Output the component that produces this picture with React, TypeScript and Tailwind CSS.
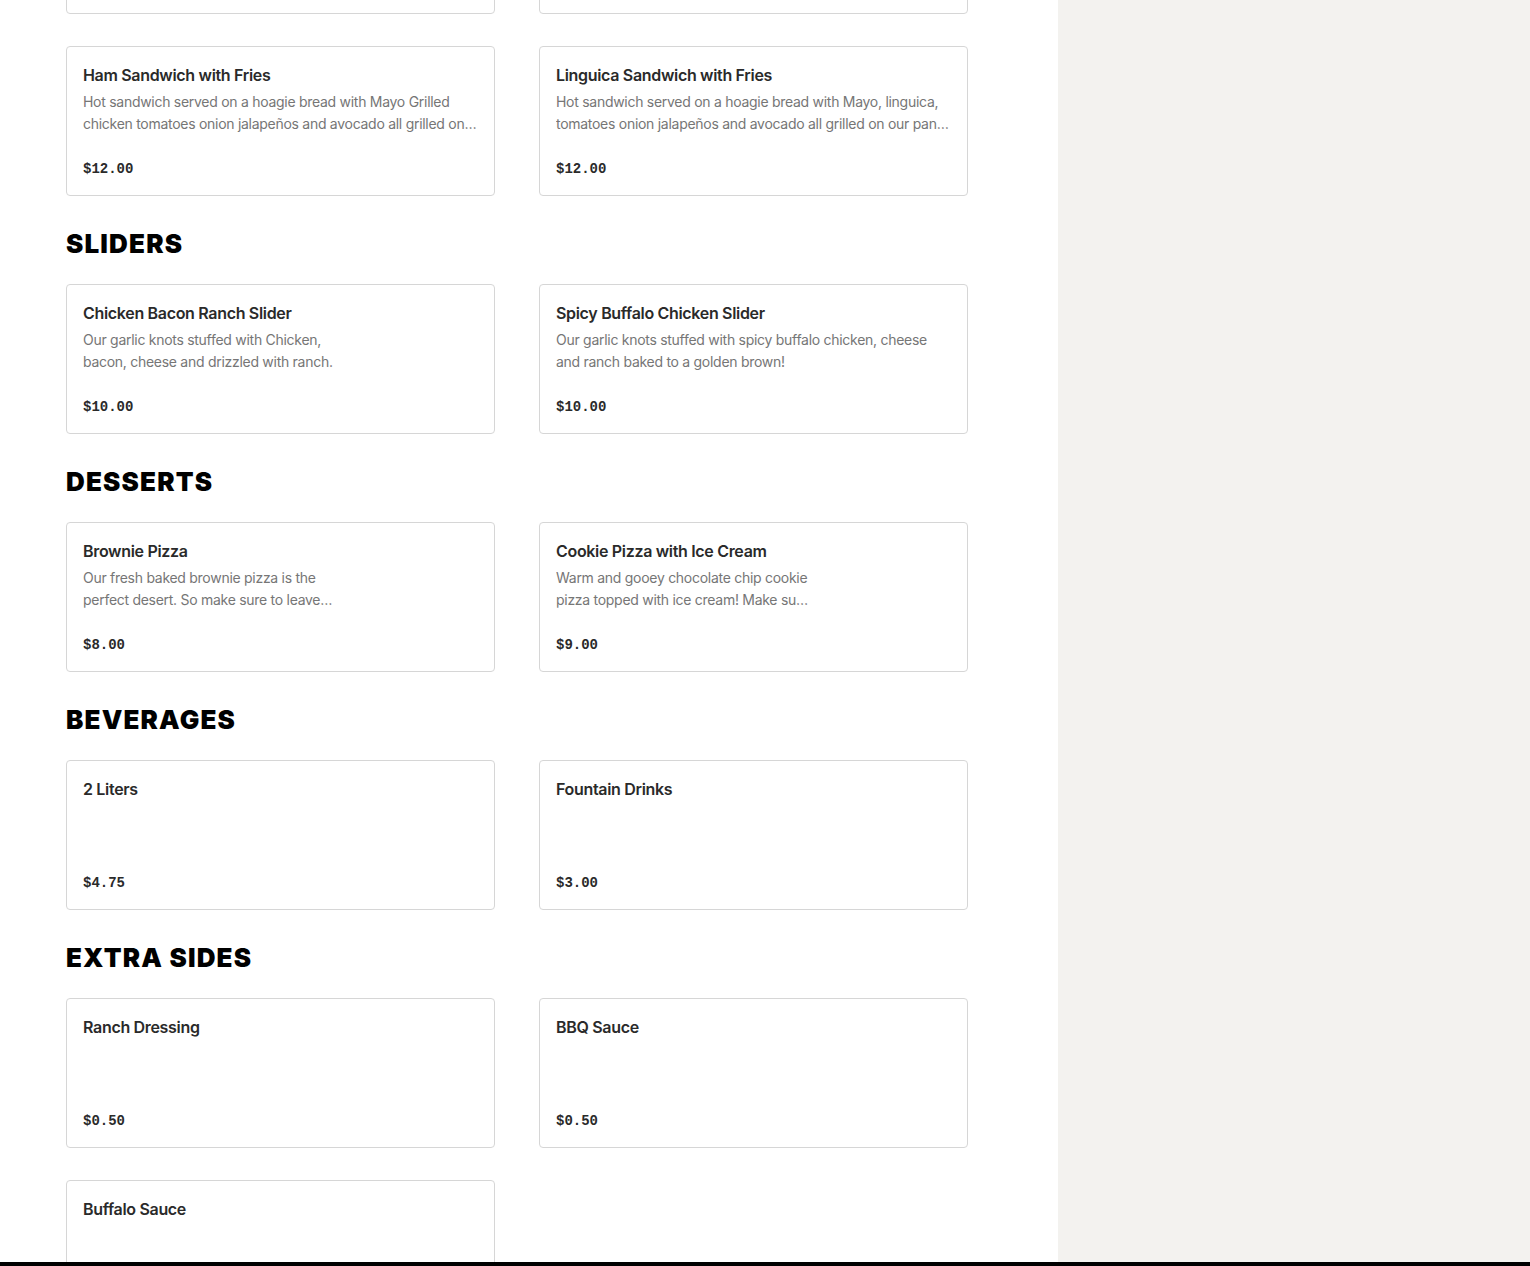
import React from "react";

type Item = { name: string; desc?: string; price: string; narrow?: boolean };
type Section = { title?: string; items: Item[] };

const sections: Section[] = [
  {
    items: [
      {
        name: "Chicken Sandwich with Fries",
        desc: "Hot sandwich served on a hoagie bread with Mayo Grilled chicken tomatoes onion jalapeños and avocado all grilled on our panini press.",
        price: "$12.00",
      },
      {
        name: "Steak Sandwich with Fries",
        desc: "Hot sandwich served on a hoagie bread with Mayo, steak, tomatoes onion jalapeños and avocado all grilled on our panini press.",
        price: "$12.00",
      },
      {
        name: "Ham Sandwich with Fries",
        desc: "Hot sandwich served on a hoagie bread with Mayo Grilled chicken tomatoes onion jalapeños and avocado all grilled on our panini press.",
        price: "$12.00",
      },
      {
        name: "Linguica Sandwich with Fries",
        desc: "Hot sandwich served on a hoagie bread with Mayo, linguica, tomatoes onion jalapeños and avocado all grilled on our panini press.",
        price: "$12.00",
      },
    ],
  },
  {
    title: "SLIDERS",
    items: [
      {
        name: "Chicken Bacon Ranch Slider",
        desc: "Our garlic knots stuffed with Chicken, bacon, cheese and drizzled with ranch.",
        price: "$10.00",
        narrow: true,
      },
      {
        name: "Spicy Buffalo Chicken Slider",
        desc: "Our garlic knots stuffed with spicy buffalo chicken, cheese and ranch baked to a golden brown!",
        price: "$10.00",
      },
    ],
  },
  {
    title: "DESSERTS",
    items: [
      {
        name: "Brownie Pizza",
        desc: "Our fresh baked brownie pizza is the perfect desert. So make sure to leave room for dessert!",
        price: "$8.00",
        narrow: true,
      },
      {
        name: "Cookie Pizza with Ice Cream",
        desc: "Warm and gooey chocolate chip cookie pizza topped with ice cream! Make sure to save room!",
        price: "$9.00",
        narrow: true,
      },
    ],
  },
  {
    title: "BEVERAGES",
    items: [
      { name: "2 Liters", price: "$4.75" },
      { name: "Fountain Drinks", price: "$3.00" },
    ],
  },
  {
    title: "EXTRA SIDES",
    items: [
      { name: "Ranch Dressing", price: "$0.50" },
      { name: "BBQ Sauce", price: "$0.50" },
      { name: "Buffalo Sauce", price: "$0.50" },
    ],
  },
];

function Card({ item }: { item: Item }) {
  return (
    <div className="h-[150px] flex flex-col border border-[#d6d6d6] rounded-[4px] bg-white px-4 pt-[16px] pb-[16px]">
      <div className="text-[16px] leading-[24px] font-semibold tracking-[-0.02em] text-[#2a2a2a]">
        {item.name}
      </div>
      {item.desc && (
        <div
          className={
            "mt-[4px] text-[14px] leading-[22px] tracking-[-0.02em] text-[#767676] line-clamp-2 " +
            (item.narrow ? "max-w-[256px]" : "")
          }
        >
          {item.desc}
        </div>
      )}
      <div
        className="mt-auto text-[14px] leading-[20px] font-bold text-[#2a2a2a]"
        style={{ fontFamily: '"Liberation Mono", "DejaVu Sans Mono", monospace' }}
      >
        {item.price}
      </div>
    </div>
  );
}

export default function App() {
  return (
    <div
      className="h-[1266px] overflow-hidden flex bg-white"
      style={{ fontFamily: 'Inter, "Noto Sans", Arial, sans-serif' }}
    >
      <div className="w-[1058px] shrink-0 bg-white pl-[66px] pr-[90px]">
        <div className="-mt-[136px] flex flex-col">
          {sections.map((s, i) => (
            <div key={i} className={i === 0 ? "" : "mt-[32px]"}>
              {s.title && (
                <h2 className="text-[26px] leading-[32px] font-black tracking-[0.045em] text-black mb-[24px]">
                  {s.title}
                </h2>
              )}
              <div className="grid grid-cols-2 gap-x-[44px] gap-y-[32px]">
                {s.items.map((it) => (
                  <Card key={it.name} item={it} />
                ))}
              </div>
            </div>
          ))}
          <div className="h-[80px]" />
        </div>
      </div>
      <div className="flex-1 bg-[#f3f2ef]" />
      <div className="fixed left-0 right-0 bottom-0 h-[4px] bg-black" />
    </div>
  );
}
